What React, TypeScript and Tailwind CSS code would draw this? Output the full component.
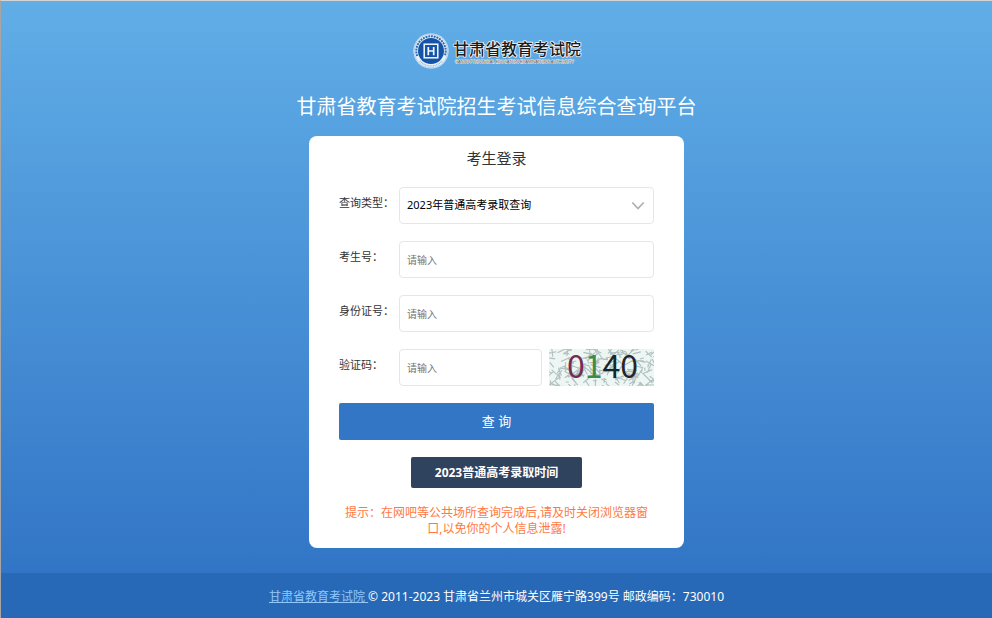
import { useState } from "react";

const inputClass =
  "h-[37px] w-full min-w-0 rounded border border-[#e6e6e6] bg-white px-[7px] text-[10px] text-black outline-none placeholder:text-[#757575] focus:border-[#3376c6]";

function Logo() {
  return (
    <svg
      width="172"
      height="38"
      viewBox="0 0 172 38"
      role="img"
      aria-label="甘肃省教育考试院"
    >
      <circle cx="20" cy="19" r="17.6" fill="#e6f1fa" />
      <circle cx="20" cy="19" r="16.8" fill="none" stroke="#8db4de" strokeWidth="0.6" />
      <path d="M6.2 24a14.7 14.7 0 1 1 27.6 0" fill="none" stroke="#2f68b2" strokeWidth="2" strokeDasharray="1.9 0.9" />
      <path d="M9 29a14.7 14.7 0 0 0 22 0" fill="none" stroke="#8fb0d8" strokeWidth="1.2" strokeDasharray="0.9 0.7" />
      <circle cx="20" cy="19" r="13" fill="#1553a6" />
      <g fill="none" stroke="#f2f8fd">
        <rect x="13.2" y="12.2" width="13.6" height="13.6" strokeWidth="1.5" />
        <path d="M17.3 15v8.2M22.7 15v8.2M17.3 19h5.4" strokeWidth="1.7" />
      </g>
      <g stroke="#f4f8fb" strokeLinejoin="round" style={{ paintOrder: "stroke" }} fill="#1b1b1b">
        <text
          x="42"
          y="23"
          fontSize="16"
          fontWeight="500"
          strokeWidth="1.6"
          fontFamily="'Noto Sans CJK SC', sans-serif"
        >
          甘肃省教育考试院
        </text>
        <text
          x="44"
          y="31"
          fontSize="4"
          fill="#4a4a4a"
          strokeWidth="0.8"
          fontFamily="'Liberation Sans', sans-serif"
        >
          GANSU PROVINCIAL EDUCATION EXAMINATIONS AUTHORITY
        </text>
      </g>
    </svg>
  );
}

// background scratches of the captcha, always the same ones
const scratches = Array.from({ length: 190 }, (_, i) => {
  const x = (i * 64.89) % 105;
  const y = (i * i * 3.71) % 37;
  const dx = ((i * i * 7) % 23) - 11;
  const dy = ((i * 11) % 19) - 9;
  return `M${x.toFixed(1)} ${y.toFixed(1)}l${dx} ${dy}`;
}).join("");

function Captcha() {
  return (
    <svg
      viewBox="0 0 105 37"
      className="h-[37px] w-[105px] overflow-visible"
      role="img"
      aria-label="验证码 0140"
    >
      <clipPath id="captcha-box">
        <rect width="105" height="37" />
      </clipPath>
      <rect width="105" height="37" fill="#edf6f3" />
      <path
        d={scratches}
        clipPath="url(#captcha-box)"
        fill="none"
        stroke="#9fb3b1"
        strokeWidth="1.1"
        opacity="0.8"
      />
      <text x="18" y="29" fontSize="32" fontFamily="'Noto Sans CJK SC', sans-serif">
        <tspan fill="#722c55">0</tspan>
        <tspan fill="#3f8a45">1</tspan>
        <tspan fill="#14282a">4</tspan>
        <tspan fill="#2a2426">0</tspan>
      </text>
    </svg>
  );
}

function Field({ id, label, children }: { id: string; label: string; children: React.ReactNode }) {
  return (
    <div className="flex">
      <label htmlFor={id} className="w-[60px] shrink-0 pt-2 text-[11px] leading-4 text-[#333]">
        {label}
      </label>
      <div className="flex min-w-0 flex-1 gap-[7px]">{children}</div>
    </div>
  );
}

export default function App() {
  const [type, setType] = useState("2023");
  const [number, setNumber] = useState("");
  const [idCard, setIdCard] = useState("");
  const [code, setCode] = useState("");

  const handleSubmit = (e: React.FormEvent) => {
    e.preventDefault();
  };

  return (
    <div className="flex min-h-screen flex-col border-t border-l border-t-[#d5d5d5] border-l-[#a8a5a2] bg-[#2769b7] font-['Noto_Sans','Noto_Sans_CJK_SC',sans-serif]">
      <main className="flex flex-1 flex-col items-center bg-linear-to-b from-[#61aee7] to-[#3275c6] px-4 pt-[31px] pb-[25px]">
        <Logo />
        <h1 className="mt-[21px] text-center text-[20px] leading-8 text-white">
          甘肃省教育考试院招生考试信息综合查询平台
        </h1>

        <form
          onSubmit={handleSubmit}
          className="mt-[13px] flex w-full max-w-[375px] flex-col rounded-lg bg-white px-[30px] pt-3 pb-[11px]"
        >
          <h2 className="mb-[19px] text-center text-[15px] leading-5 text-[#333]">考生登录</h2>

          <div className="flex flex-col gap-[17px]">
            <Field id="type" label="查询类型：">
              <div className="relative w-full">
                <select
                  id="type"
                  value={type}
                  onChange={(e) => setType(e.target.value)}
                  className="h-[37px] w-full appearance-none rounded border border-[#e6e6e6] bg-white pr-8 pl-[7px] text-[11px] text-black outline-none"
                >
                  <option value="2023">2023年普通高考录取查询</option>
                </select>
                <svg
                  className="pointer-events-none absolute top-[14px] right-[9px]"
                  width="14"
                  height="10"
                  viewBox="0 0 14 10"
                  fill="none"
                  stroke="#b0b0b0"
                  strokeWidth="1.8"
                >
                  <path d="M1.3 1.5 7 7.5l5.7-6" />
                </svg>
              </div>
            </Field>

            <Field id="number" label="考生号：">
              <input
                id="number"
                type="text"
                placeholder="请输入"
                value={number}
                onChange={(e) => setNumber(e.target.value)}
                className={inputClass}
              />
            </Field>

            <Field id="idCard" label="身份证号：">
              <input
                id="idCard"
                type="text"
                placeholder="请输入"
                value={idCard}
                onChange={(e) => setIdCard(e.target.value)}
                className={inputClass}
              />
            </Field>

            <Field id="code" label="验证码：">
              <input
                id="code"
                type="text"
                placeholder="请输入"
                value={code}
                onChange={(e) => setCode(e.target.value)}
                className={inputClass}
              />
              <div className="shrink-0">
                <Captcha />
              </div>
            </Field>

            <button type="submit" className="h-[37px] rounded-xs bg-[#3376c6] text-[13px] text-white">
              查 询
            </button>

            <button
              type="button"
              className="h-[31px] self-center rounded-xs bg-[#2f435e] px-6 text-[12px] font-bold text-white"
            >
              2023普通高考录取时间
            </button>
          </div>

          <p className="mt-[17px] text-center text-[12px] leading-4 text-[#ff7842]">
            提示：在网吧等公共场所查询完成后,请及时关闭浏览器窗口,以免你的个人信息泄露!
          </p>
        </form>
      </main>

      <footer className="bg-[#2769b7] px-4 pt-[15px] pb-[13px] text-center text-[12px] leading-[17px] text-white">
        <a href="#" className="whitespace-pre text-[#8fc7fb] underline">
          {"甘肃省教育考试院 "}
        </a>
        © 2011-2023 甘肃省兰州市城关区雁宁路399号 邮政编码：730010
      </footer>
    </div>
  );
}
